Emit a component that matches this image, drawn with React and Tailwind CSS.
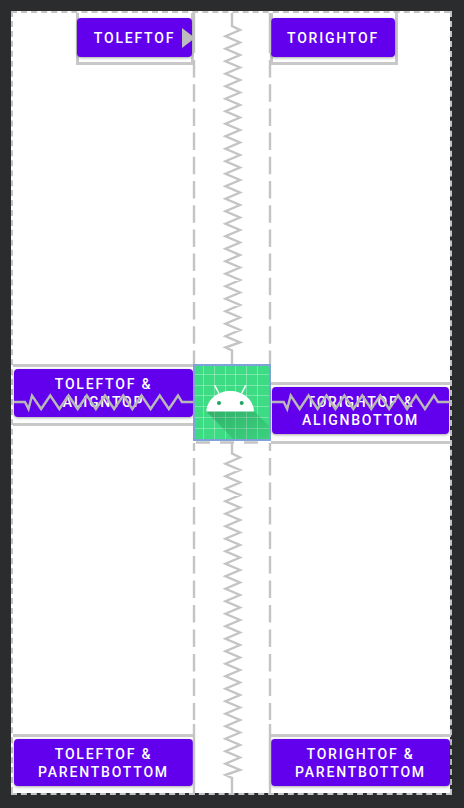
import React from 'react';

const LINE = '#c4c4c4';

const verticalSpring = (top, bottom, first) => {
  const pts = [`232,${top}`, `232,${first - 4}`];
  for (let i = 0; i <= 25; i++) {
    pts.push(`240,${first + i * 12.5}`);
    pts.push(`225.5,${first + i * 12.5 + (i === 25 ? 5 : 6.25)}`);
  }
  pts.push(`232,${first + 25 * 12.5 + 8}`, `232,${bottom}`);
  return pts.join(' ');
};

const horizontalSpring = (start, end, firstUp, period) => {
  const pts = [`${start},402`, `${firstUp - 7},402`, `${firstUp - 3.5},409`];
  for (let i = 0; i <= 8; i++) {
    pts.push(`${firstUp + i * period},395.5`);
    if (i < 8) pts.push(`${firstUp + i * period + period / 2},409`);
  }
  pts.push(`${firstUp + 8 * period + 4},402`, `${end},402`);
  return pts.join(' ');
};

const Guides = () => (
  <svg className="absolute inset-0 pointer-events-none" width="464" height="808" fill="none" stroke={LINE} strokeWidth="2.4">
    {[194, 270].map((x) => (
      <g key={x}>
        <line x1={x} y1="13" x2={x} y2="53" />
        <line x1={x} y1="60" x2={x} y2="364" strokeDasharray="17.5 6.7" />
        <line x1={x} y1="443" x2={x} y2="451" />
        <line x1={x} y1="458" x2={x} y2="720" strokeDasharray="17.5 7" />
        <line x1={x} y1="724" x2={x} y2="793" />
      </g>
    ))}
    <line x1="196" y1="442.5" x2="268" y2="442.5" strokeDasharray="14 10" />
    <polyline points={verticalSpring(13, 364, 30)} />
    <polyline points={verticalSpring(442, 793, 457.5)} />
    <polyline points={horizontalSpring(14, 193, 32, 18.25)} stroke="#b8b8b8" />
    <polyline points={horizontalSpring(272, 450, 290.7, 17.9)} stroke="#b8b8b8" />
    <polygon points="182,28 195,38 182,48" fill="#bdbdbd" stroke="none" />
  </svg>
);

const Button = ({ className, children }) => (
  <div
    className={`flex flex-col items-center justify-center rounded-[4px] bg-[#6200ee] text-[14px] leading-[18px] font-medium tracking-[1.8px] text-white shadow-[0_1px_3px_rgba(0,0,0,0.35)] ${className}`}
  >
    {children}
  </div>
);

const AndroidIcon = () => (
  <svg className="block" width="74" height="73" viewBox="195 366 74 73">
    <defs>
      <linearGradient id="longShadow" x1="0" y1="0" x2="1" y2="1">
        <stop offset="0" stopColor="#000000" stopOpacity="0.2" />
        <stop offset="1" stopColor="#000000" stopOpacity="0.04" />
      </linearGradient>
    </defs>
    <rect x="195" y="366" width="74" height="73" fill="#3ddc84" />
    <g stroke="#ffffff" strokeOpacity="0.3" strokeWidth="1">
      {[203.5, 214.5, 225.5, 235.5, 246.5, 257.5].map((x) => (
        <line key={x} x1={x} y1="366" x2={x} y2="439" />
      ))}
      {[374.5, 385.5, 395.5, 406.5, 417.5, 428.5].map((y) => (
        <line key={y} x1="195" y1={y} x2="269" y2={y} />
      ))}
    </g>
    <polygon points="206,411 254,411 271,428 271,441 235,441" fill="url(#longShadow)" />
    <path d="M206.3 411.5 C207 399 218 391 230.2 391 C242.5 391 253.3 399 254 411.5 Z" fill="#ffffff" />
    <path d="M214.7 385.3 L219 393.5 M245.8 385.3 L241.5 393.5" stroke="#ffffff" strokeWidth="1.5" />
    <circle cx="219" cy="403" r="2" fill="#1fa463" />
    <circle cx="241.7" cy="403" r="2" fill="#1fa463" />
  </svg>
);

export default function App() {
  return (
    <div
      className="relative w-[464px] h-[808px] overflow-hidden bg-[#2b2c2e] pl-[11px] pt-[11px]"
      style={{ fontFamily: 'Roboto, sans-serif' }}
    >
      <div className="w-[441px] h-[784px] border-r-2 border-b-2 border-dashed border-[#c4c4c4] bg-white bg-clip-padding">
        <div className="h-[782px] border-t-2 border-l-2 border-dashed border-[#c4c4c4] grid grid-cols-[180px_78px_179px]">
          {/* left column */}
          <div className="flex flex-col h-[780px]">
            <div className="ml-[63px] w-[118px] h-[52px] border-[3px] border-t-0 border-[#c8c8c8] pt-[5px]">
              <Button className="w-[115px] h-[39px] -ml-[2px]">TOLEFTOF</Button>
            </div>
            <div className="mt-[299px] h-[62px] border-y-[3px] border-[#c8c8c8] pt-[2px]">
              <Button className="h-[48px] ml-px w-[179px]">
                <span>TOLEFTOF &amp;</span>
                <span>ALIGNTOP</span>
              </Button>
            </div>
            <div className="mt-auto h-[59px] border-t-[3px] border-[#c8c8c8] pt-[2px]">
              <Button className="h-[47px] ml-px w-[179px]">
                <span>TOLEFTOF &amp;</span>
                <span>PARENTBOTTOM</span>
              </Button>
            </div>
          </div>

          {/* center column */}
          <div className="pt-[351px]">
            <div className="w-[78px] h-[77px] border-2 border-[#7fa3d9]">
              <AndroidIcon />
            </div>
          </div>

          {/* right column */}
          <div className="flex flex-col h-[780px]">
            <div className="-ml-px w-[128px] h-[52px] border-[3px] border-t-0 border-[#c8c8c8] pt-[5px]">
              <Button className="w-[124px] h-[39px] -ml-[2px]">TORIGHTOF</Button>
            </div>
            <div className="mt-[317px] w-[180px] h-[62px] border-y-[3px] border-[#c8c8c8] pt-[2px]">
              <Button className="h-[47px] ml-px w-[177px]">
                <span>TORIGHTOF &amp;</span>
                <span>ALIGNBOTTOM</span>
              </Button>
            </div>
            <div className="mt-auto w-[180px] h-[59px] border-t-[3px] border-[#c8c8c8] pt-[2px]">
              <Button className="h-[47px] w-[179px]">
                <span>TORIGHTOF &amp;</span>
                <span>PARENTBOTTOM</span>
              </Button>
            </div>
          </div>
        </div>
      </div>
      <Guides />
    </div>
  );
}
